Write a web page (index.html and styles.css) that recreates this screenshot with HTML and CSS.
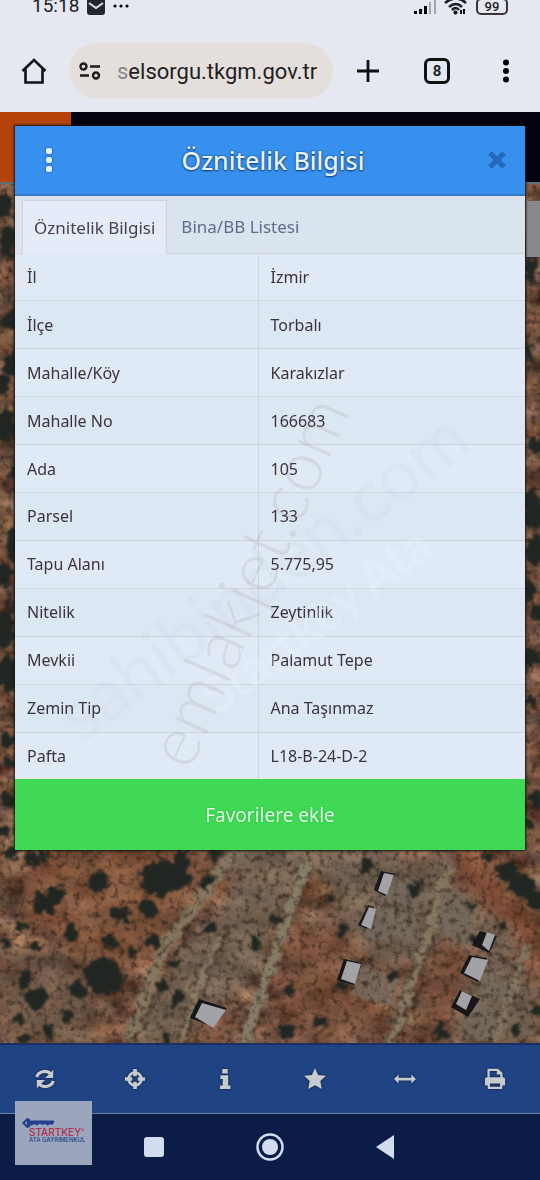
FILE: index.html
```
<!DOCTYPE html>
<html lang="tr">
<head>
  <meta charset="UTF-8" />
  <meta name="viewport" content="width=device-width, initial-scale=1.0"/>
  <title>Parsel Sorgu - Öznitelik Bilgisi</title>
  <link rel="stylesheet" href="styles.css">
</head>
<body>
  <!-- BROWSER -->
  <header class="browser">
    <div class="status">
      <span class="clock">15:18</span>
      <svg class="mail" viewBox="0 0 18 18"><rect width="18" height="18" rx="3" fill="#25262b"/><path d="M2 6l7 5 7-5" fill="none" stroke="#dfe2ea" stroke-width="2"/></svg>
      <svg class="more" viewBox="0 0 16 4"><circle cx="2" cy="2" r="1.6"/><circle cx="8" cy="2" r="1.6"/><circle cx="14" cy="2" r="1.6"/></svg>
      <svg class="signal" viewBox="0 0 22 16"><path d="M0 13h3v3H0zM5 11h3v5H5zM10 8h3v8h-3z"/><path d="M15 4h2v12h-2zM20 0h2v16h-2z" fill="#a3a5ab"/></svg>
      <svg class="wifi" viewBox="0 0 24 18"><g fill="none" stroke="#1d1e22" stroke-width="2.6"><path d="M1 6Q12-3 22 6M5 10q7-6 13 0M8 13q4-4 7 0"/></g><circle cx="11.500" cy="15.500" r="2"/><path d="M16 13h2v4h-2zM19 12h2v5h-2z"/></svg>
      <span class="battery">99</span>
    </div>
    <div class="address-bar">
      <button class="icon-btn" aria-label="Ana sayfa"><svg viewBox="0 0 26 26"><path d="M1.500 13L13 2l11.500 11M4.500 11v13.500h17V11" fill="none" stroke="#111" stroke-width="2.600"/></svg></button>
      <div class="address">
        <svg viewBox="0 0 22 18"><g fill="none" stroke="#1c1a1b" stroke-width="2.400"><circle cx="4.500" cy="4.500" r="3"/><path d="M11 4.500h10M1 13.500h9"/><circle cx="17" cy="13.500" r="3"/></g></svg>
        <span><span class="faded">s</span>elsorgu.tkgm.gov.tr</span>
      </div>
      <div class="actions">
        <button class="icon-btn" aria-label="Yeni sekme"><svg viewBox="0 0 26 26"><path d="M13 2v22M2 13h22" stroke="#111" stroke-width="2.800"/></svg></button>
        <button class="icon-btn tab-count" aria-label="Sekmeler">8</button>
        <button class="icon-btn" aria-label="Menü"><svg viewBox="0 0 26 26"><circle cx="13" cy="4.500" r="3"/><circle cx="13" cy="13" r="3"/><circle cx="13" cy="21.500" r="3"/></svg></button>
      </div>
    </div>
  </header>

  <!-- MAP + DIALOG -->
  <main class="stage">
    <svg class="map" viewBox="0 112 540 931" preserveAspectRatio="xMidYMax slice" aria-hidden="true">
      <defs>
        <filter id="soil" x="0" y="0" width="1" height="1" color-interpolation-filters="sRGB">
          <feTurbulence type="fractalNoise" baseFrequency="0.03 0.045" numOctaves="6" seed="8"/>
          <feColorMatrix values=".7 0 0 0 0.110  .55 .12 0 0 -0.010  .42 .12 .1 0 -0.070  0 0 0 0 1"/>
        </filter>
        <filter id="grain" x="0" y="0" width="1" height="1" color-interpolation-filters="sRGB">
          <feTurbulence type="fractalNoise" baseFrequency="0.160" numOctaves="4" seed="3"/>
          <feColorMatrix values="0 0 0 0 .13  0 0 0 0 .09  0 0 0 0 .06  2.200 0 0 0 -1.050"/>
          <feGaussianBlur stdDeviation="0.500"/>
        </filter>
        <filter id="rough" x="-5%" y="-5%" width="110%" height="110%">
          <feTurbulence type="fractalNoise" baseFrequency="0.120" numOctaves="3" seed="5"/>
          <feDisplacementMap in="SourceGraphic" scale="14" xChannelSelector="R" yChannelSelector="G"/>
          <feGaussianBlur stdDeviation="0.800"/>
        </filter>
        <filter id="soft"><feGaussianBlur stdDeviation="7"/></filter>
        <circle id="t" r="10"/>
      </defs>
      <rect y="112" width="540" height="931" fill="#7b5742"/>
      <rect y="112" width="540" height="931" filter="url(#soil)"/>
      <g filter="url(#soft)" opacity=".6">
        <path d="M205 840h180l35 30 80 70 40 60v43H420l30-120-60-55-50 20-40-20-50 115-80 60h-45l60-100 50-60z" fill="#777061"/>
        <path d="M340 860h120l60 80-20 103h-50l-10-110-50 40-60-30z" fill="#777061"/>
        <path d="M0 945l60 10 30 40 10 48H0z" fill="#6f5e50"/>
        <path d="M465 840l75 90v60l-30-60-60-55z" fill="#87492f"/>
        <path d="M285 930l50-10 50 50-5 73h-90z" fill="#80523c"/>
        <path d="M440 940l40 10-30 93h-35z" fill="#80523c"/>
        <path d="M30 850h150l30 20-70 100-60-20-60-30z" fill="#8c5a3d"/>
      </g>
      <g fill="none" filter="url(#rough)">
        <path d="M235 850l-35 50-35 45-38 98" stroke="#84765f" stroke-width="12"/>
        <path d="M213 905l-35 45-45 93" stroke="#453b30" stroke-width="2"/>
        <path d="M222 930l-20 45-22 68" stroke="#8c7d66" stroke-width="4"/>
        <path d="M226 932l-19 45-22 66" stroke="#3d332b" stroke-width="2"/>
        <path d="M307 860l-24 70-38 113" stroke="#877b66" stroke-width="11"/>
        <path d="M300 860l-24 70-38 113M312 864l-24 70-38 109" stroke="#514638" stroke-width="1"/>
        <path d="M450 865l-25 75-36 103" stroke="#867861" stroke-width="10"/>
        <path d="M434 895l-15 50-33 98M450 900l-20 50-34 93" stroke="#51453a" stroke-width="2"/>
        <path d="M528 945l-18 50-18 48" stroke="#857762" stroke-width="7"/>
        <path d="M392 872l40 16M380 902l48 15M358 960l47 18M494 950l28 22M486 993l24 11M228 1003l22 8" stroke="#42372d" stroke-width="2"/>
      </g>
      <g fill="#746b5e" opacity=".8" filter="url(#rough)">
        <path d="M392 878l36 14-12 22-38-15zM382 906l37 12-12 24-42-6zM358 964l42 16-8 28-40-15zM442 890l34 18-8 35-34-10zM486 971l26 16-8 18-22-10zM476 1005l24 5-8 30-30-4z"/>
      </g>
      <rect y="184" width="540" height="859" filter="url(#grain)" opacity=".7"/>
      <g fill="#242824" filter="url(#rough)">
        <use href="#t" transform="translate(160 878) scale(2 1.800)"/>
        <use href="#t" transform="translate(181 876) scale(1 1.200)"/>
        <use href="#t" transform="translate(44 903) scale(1.100 1.100)"/>
        <use href="#t" transform="translate(56 895) scale(.9)"/>
        <use href="#t" transform="translate(97 882) scale(1 .9)"/>
        <use href="#t" transform="translate(120 914) scale(1 .9)"/>
        <use href="#t" transform="translate(147 909) scale(1 .9)"/>
        <use href="#t" transform="translate(72 932) scale(.8)"/>
        <use href="#t" transform="translate(110 941) scale(.7)"/>
        <use href="#t" transform="translate(154 942) scale(.7)"/>
        <use href="#t" transform="translate(132 953) scale(.5)"/>
        <use href="#t" transform="translate(104 976) scale(2 1.800)"/>
        <use href="#t" transform="translate(36 999) scale(1.100 1.200)"/>
        <use href="#t" transform="translate(24 978) scale(.7 1)"/>
        <use href="#t" transform="translate(78 990) scale(.8)"/>
        <use href="#t" transform="translate(67 1017) scale(.7 .6)"/>
        <use href="#t" transform="translate(48 1032) scale(.7)"/>
        <use href="#t" transform="translate(24 1038) scale(.5)"/>
        <use href="#t" transform="translate(18 1018) scale(.5)"/>
        <use href="#t" transform="translate(5 943) scale(.6)"/>
        <use href="#t" transform="translate(36 947) scale(.5)"/>
        <use href="#t" transform="translate(22 925) scale(.5)"/>
        <use href="#t" transform="translate(12 853) scale(.7)"/>
        <use href="#t" transform="translate(31 859) scale(.7)"/>
        <use href="#t" transform="translate(44 855) scale(.6)"/>
        <use href="#t" transform="translate(180 858) scale(.8)"/>
        <use href="#t" transform="translate(206 881) scale(.6)"/>
        <use href="#t" transform="translate(213 854) scale(.6)"/>
        <use href="#t" transform="translate(212 929) scale(.7 .5)"/>
        <use href="#t" transform="translate(174 964) scale(.6 .4)"/>
        <use href="#t" transform="translate(163 985) scale(.6)"/>
        <use href="#t" transform="translate(177 1000) scale(.8)"/>
        <use href="#t" transform="translate(166 1038) scale(.6)"/>
        <use href="#t" transform="translate(257 944) scale(.4 .7)"/>
        <use href="#t" transform="translate(366 865) scale(.8)"/>
        <use href="#t" transform="translate(415 889) scale(.7)"/>
        <use href="#t" transform="translate(330 898) scale(.5)"/>
        <use href="#t" transform="translate(342 929) scale(.6)"/>
        <use href="#t" transform="translate(275 920) scale(.4)"/>
        <use href="#t" transform="translate(340 985) scale(.6)"/>
        <use href="#t" transform="translate(393 975) scale(.4)"/>
        <use href="#t" transform="translate(290 989) scale(.6)"/>
        <use href="#t" transform="translate(319 1023) scale(.7)"/>
        <use href="#t" transform="translate(286 1032) scale(.8)"/>
        <use href="#t" transform="translate(441 1031) scale(.8)"/>
        <use href="#t" transform="translate(515 1029) scale(.7)"/>
        <use href="#t" transform="translate(488 857) scale(.6)"/>
        <use href="#t" transform="translate(472 905) scale(.4)"/>
        <use href="#t" transform="translate(475 940) scale(.5)"/>
        <use href="#t" transform="translate(507 872) scale(1)"/>
        <use href="#t" transform="translate(522 884) scale(1.300 1.100)"/>
        <use href="#t" transform="translate(537 900) scale(1.100)"/>
        <use href="#t" transform="translate(502 925) scale(.4)"/>
        <use href="#t" transform="translate(538 1010) scale(.5)"/>
        <!-- left strip -->
        <use href="#t" transform="translate(4 205) scale(.9 1.200)"/>
        <use href="#t" transform="translate(8 242) scale(.8 1.500)"/>
        <use href="#t" transform="translate(10 322) scale(.7 1)"/>
        <use href="#t" transform="translate(10 365) scale(.8 1.200)"/>
        <use href="#t" transform="translate(2 385) scale(.7 1)"/>
        <use href="#t" transform="translate(5 425) scale(1 1.700)"/>
        <use href="#t" transform="translate(13 472) scale(.5 .8)"/>
        <use href="#t" transform="translate(12 543) scale(.6 1.800)"/>
        <use href="#t" transform="translate(4 574) scale(.9 1.200)"/>
        <use href="#t" transform="translate(5 628) scale(1 1.800)"/>
        <use href="#t" transform="translate(8 674) scale(1.100 2)"/>
        <use href="#t" transform="translate(7 740) scale(.6 .8)"/>
        <use href="#t" transform="translate(10 762) scale(.5)"/>
        <use href="#t" transform="translate(9 800) scale(.7)"/>
        <use href="#t" transform="translate(3 832) scale(.7)"/>
        <!-- right strip -->
        <use href="#t" transform="translate(530 270) scale(.6 1.500)"/>
        <use href="#t" transform="translate(529 352) scale(.4 1)"/>
        <use href="#t" transform="translate(536 445) scale(.9 .7)"/>
        <use href="#t" transform="translate(534 510) scale(1 2)"/>
        <use href="#t" transform="translate(536 550) scale(1 1.500)"/>
        <use href="#t" transform="translate(530 592) scale(.5 1)"/>
        <use href="#t" transform="translate(538 612) scale(.7 1)"/>
        <use href="#t" transform="translate(531 658) scale(.8 .9)"/>
        <use href="#t" transform="translate(530 700) scale(.5 .6)"/>
        <use href="#t" transform="translate(536 800) scale(.7 .9)"/>
        <use href="#t" transform="translate(530 825) scale(.5)"/>
      </g>
      <!-- buildings -->
      <g fill="#17171a">
        <path d="M374 890l7-19 14 3-10 22zM358 925l10-20 6 2-7 22zM337 980l7-21 18 4-8 22zM460 973l9-18 18 3-9 24zM451 1007l9-17 20 9-12 18zM472 945l8-14 17 5-8 17zM190 1018l9-19 28 9-14 19z"/>
      </g>
      <g fill="#a3a2a7">
        <path d="M378 891l6-18 10 2-7 20zM361 925l8-18 7 2-5 20zM341 979l6-18 14 3-6 20zM464 973l8-16 16 3-8 21zM456 1004l6-13 10 5-6 14zM482 945l5-13 8 3-6 16zM195 1017l7-14 24 7-13 18z"/>
      </g>
      <!-- site header behind the dialog -->
      <path d="M0 112h540v70H0z" fill="#03040f"/>
      <path d="M0 112h71v71H0z" fill="#b64308"/>
      <path d="M0 183h540" stroke="#5f6f74" stroke-width="2"/>
      <path d="M526 201h14v56h-14z" fill="#8a888c"/>
    </svg>

    <section class="dialog">
      <div class="dialog-header">
        <button class="dialog-btn" aria-label="Seçenekler"><svg viewBox="0 0 26 26"><g fill="#e4f3ff"><rect x="10" y="1" width="6" height="6" rx="2"/><rect x="10" y="10" width="6" height="6" rx="2"/><rect x="10" y="19" width="6" height="6" rx="2"/></g></svg></button>
        <h1>Öznitelik Bilgisi</h1>
        <button class="dialog-btn close" aria-label="Kapat"><svg viewBox="0 0 26 26"><path d="M6 6l14 14M20 6L6 20" stroke="#2567b8" stroke-width="5"/></svg></button>
      </div>
      <div class="tabs">
        <button class="tab active">Öznitelik Bilgisi</button>
        <button class="tab">Bina/BB Listesi</button>
      </div>
      <table class="info">
        <tr><th scope="row">İl</th><td>İzmir</td></tr>
        <tr><th scope="row">İlçe</th><td>Torbalı</td></tr>
        <tr><th scope="row">Mahalle/Köy</th><td>Karakızlar</td></tr>
        <tr><th scope="row">Mahalle No</th><td>166683</td></tr>
        <tr><th scope="row">Ada</th><td>105</td></tr>
        <tr><th scope="row">Parsel</th><td>133</td></tr>
        <tr><th scope="row">Tapu Alanı</th><td>5.775,95</td></tr>
        <tr><th scope="row">Nitelik</th><td>Zeytinlik</td></tr>
        <tr><th scope="row">Mevkii</th><td>Palamut Tepe</td></tr>
        <tr><th scope="row">Zemin Tip</th><td>Ana Taşınmaz</td></tr>
        <tr><th scope="row">Pafta</th><td>L18-B-24-D-2</td></tr>
      </table>
      <button class="favorite">Favorilere ekle</button>
    </section>

    <svg class="watermark" viewBox="0 112 540 931" preserveAspectRatio="xMidYMin meet">
      <text class="wm-white" x="218" y="716" transform="rotate(-37 218 716)">Startkey Ata</text>
      <text class="wm-faint" x="82" y="744" transform="rotate(-37 82 744)">sahibinden.com</text>
      <text class="wm-grey" x="190" y="772" transform="rotate(-66 190 772)">emlakjet.com</text>
    </svg>
  </main>

  <!-- MAP TOOLS -->
  <nav class="toolbar">
    <button aria-label="Yenile"><svg viewBox="0 0 24 24"><path d="M3 10a9 8 0 0 1 15-4M21 14a9 8 0 0 1-15 4" fill="none" stroke="#c6cbd0" stroke-width="3.500"/><path d="M21 2v9h-9zM3 22v-9h9z"/></svg></button>
    <button aria-label="Konum"><svg viewBox="0 0 24 24"><circle cx="12" cy="12" r="7" fill="none" stroke="#c6cbd0" stroke-width="3"/><path d="M10 1h4v8h-4zM10 15h4v8h-4zM1 10h8v4H1zM15 10h8v4h-8z"/></svg></button>
    <button aria-label="Bilgi"><svg viewBox="0 0 24 24"><path d="M9 1h6v5H9zM7 8h8.500v11H18v4H6.500v-4h3v-7H7z"/></svg></button>
    <button aria-label="Favoriler"><svg viewBox="0 0 24 24"><path d="M12 0l3.400 7.500 8.600 1-6.200 5.800L19.500 23 12 18.800 4.500 23l1.700-8.700L0 8.500l8.600-1z"/></svg></button>
    <button aria-label="Ölç"><svg viewBox="0 0 24 24"><path d="M0 12l5-5v3.500h14V7l5 5-5 5v-3.500H5V17z"/></svg></button>
    <button aria-label="Yazdır"><svg viewBox="0 0 24 24"><path d="M5 11V2h10l4 4v5" fill="none" stroke="#c6cbd0" stroke-width="2.500"/><path d="M14 2v5h5z"/><path d="M1 12q0-2 2-2h18q2 0 2 2v7h-3v4H4v-4H1zM6.500 17v3.500h11V17z" fill-rule="evenodd"/></svg></button>
  </nav>

  <!-- SYSTEM NAVIGATION -->
  <footer class="system">
    <button aria-label="Son uygulamalar"><svg viewBox="0 0 28 28"><rect x="4" y="4" width="20" height="20" rx="3"/></svg></button>
    <button aria-label="Ana ekran"><svg viewBox="0 0 28 28"><circle cx="14" cy="14" r="12.500" fill="none" stroke="#d3dcf0" stroke-width="2.500"/><circle cx="14" cy="14" r="8"/></svg></button>
    <button aria-label="Geri"><svg viewBox="0 0 28 28"><path d="M4 14L22 2v24z"/></svg></button>
    <div class="brand">
      <svg viewBox="0 0 34 10"><path d="M0 5l5-5 3 1v1.500h24V5l-2 2-2-1-2 1.500L23 6l-3 1-2-1.500-3 2L12 6l-2 1.500H8V9L5 10z" fill="#23408c"/><path d="M3 5l2-2v4z" fill="#9aa3b9"/></svg>
      <strong>STARTKEY<sup>®</sup></strong>
      <span>ATA GAYRİMENKUL</span>
    </div>
  </footer>
</body>
</html>
```
FILE: styles.css
```
:root {
  --ink: #3c3338;
  --blue: #3890ee;
  --panel: #dfeaf6;
  --line: #d0d4dc;
  --green: #40d955;
  --toolbar: #204383;
  --system: #0b1d46;
}

* {
  box-sizing: border-box;
}

body {
  margin: 0;
  min-height: 100vh;
  display: flex;
  flex-direction: column;
  font-family: 'Noto Sans', sans-serif;
  color: var(--ink);
  background: var(--system);
  overflow-x: hidden;
}

button {
  border: none;
  background: none;
  padding: 0;
  color: inherit;
  font: inherit;
  cursor: pointer;
}

svg {
  display: block;
}

/* browser */
.browser {
  background: #e5e8f0;
  padding-bottom: 13px;
  font-family: Roboto, sans-serif;
  color: #1d1e22;
}

.status {
  display: flex;
  align-items: center;
  gap: 8px;
  height: 12px;
  margin-bottom: 31px;
  padding: 0 32px;
}

.clock {
  font-size: 19px;
  line-height: 20px;
}

.mail {
  width: 18px;
  height: 18px;
}

.more {
  width: 16px;
  height: 4px;
}

.signal {
  width: 22px;
  height: 16px;
  margin-left: auto;
}

.wifi {
  width: 24px;
  height: 18px;
}

.battery {
  border: 2px solid #3c3338;
  border-radius: 5px;
  width: 32px;
  font-size: 13px;
  font-weight: 500;
  line-height: 13px;
  text-align: center;
}

.address-bar {
  display: flex;
  align-items: center;
  gap: 22px;
  padding: 0 21px;
}

.icon-btn {
  width: 26px;
  height: 26px;
  flex: none;
}

.icon-btn svg {
  width: 26px;
  height: 26px;
}

.address {
  flex: 1;
  display: flex;
  align-items: center;
  gap: 16px;
  height: 56px;
  padding: 0 10px;
  border-radius: 28px;
  background: #e5dfdc;
  font-size: 22px;
  white-space: nowrap;
}

.address svg {
  width: 22px;
  height: 18px;
  flex: none;
}

.faded {
  color: #8d8886;
}

.actions {
  display: flex;
  gap: 43px;
}

.tab-count {
  border: 3px solid #111;
  border-radius: 6px;
  font-size: 15px;
  font-weight: 700;
  line-height: 18px;
}

/* map area */
.stage {
  flex: 1;
  position: relative;
  padding: 14px 15px 193px;
  overflow: hidden;
}

.map,
.watermark {
  position: absolute;
  top: 0;
  left: 0;
  width: 100%;
  height: 100%;
}

.watermark {
  pointer-events: none;
  font-family: Lato, sans-serif;
}

.wm-grey {
  font-size: 70px;
  font-weight: 300;
  fill: rgba(140, 110, 115, 0.14);
}

.wm-faint {
  font-size: 72px;
  fill: rgba(150, 160, 185, 0.06);
}

.wm-white {
  font-size: 50px;
  font-weight: 700;
  fill: rgba(240, 244, 255, 0.3);
}

/* dialog */
.dialog {
  position: relative;
  background: var(--panel);
  box-shadow: 0 0 2px 1px #14130f;
}

.dialog-header {
  display: flex;
  align-items: center;
  justify-content: space-between;
  height: 70px;
  padding: 0 15px 0 21px;
  background: var(--blue);
  border-bottom: 2px solid #3779c4;
}

.dialog-header h1 {
  margin: 0;
  font-size: 25px;
  font-weight: 500;
  color: #e4f3ff;
  text-shadow: 0 0 2px #123c70, 0 1px 2px #123c70;
}

.dialog-btn,
.dialog-btn svg {
  width: 26px;
  height: 26px;
}

.dialog-btn svg {
  filter: drop-shadow(0 0 1px #123c70);
}

.dialog-btn.close svg {
  filter: none;
}

.tabs {
  display: flex;
  height: 58px;
  padding: 4px 7px 0;
  background: #d9e4ef;
  border-bottom: 1px solid var(--line);
}

.tab {
  padding: 0 14px;
  font-size: 17px;
  color: #5f6c8d;
}

.tab.active {
  margin-bottom: -1px;
  padding: 0 11px;
  background: #e3ecf8;
  border: 1px solid var(--line);
  border-bottom: none;
  color: #4a4248;
}

.info {
  width: 100%;
  height: 525px;
  border-collapse: collapse;
  font-size: 16px;
}

.info tr:nth-child(even) {
  background: #dce7f4;
}

.info th,
.info td {
  padding: 0 12px;
  font-weight: 400;
  text-align: left;
  border-bottom: 1px solid var(--line);
}

.info th {
  width: 243px;
  border-right: 1px solid var(--line);
}

.info tr:last-child > * {
  border-bottom: none;
}

.favorite {
  display: block;
  width: 100%;
  height: 71px;
  background: var(--green);
  color: #e2ffe5;
  font-size: 19px;
  text-shadow: 0 0 2px #23a53a;
}

/* bottom bars */
.toolbar {
  display: flex;
  height: 70px;
  background: var(--toolbar);
  border-top: 2px solid #1b2f63;
}

.toolbar button {
  flex: 1;
  display: grid;
  place-items: center;
}

.toolbar svg {
  width: 22px;
  height: 22px;
  fill: #c6cbd0;
  filter: drop-shadow(0 0 1px #081531);
}

.system {
  position: relative;
  display: flex;
  align-items: center;
  justify-content: center;
  gap: 88px;
  height: 67px;
  background: var(--system);
  border-top: 1px solid #6c7fa9;
}

.system button svg {
  width: 28px;
  height: 28px;
  fill: #d3dcf0;
}

.brand {
  position: absolute;
  left: 15px;
  bottom: 15px;
  width: 77px;
  height: 64px;
  padding: 17px 7px 0;
  background: #9ba5bb;
  color: #23408c;
  font-family: Inter, sans-serif;
  font-size: 6px;
  font-weight: 500;
  line-height: 6px;
  white-space: nowrap;
}

.brand svg {
  width: 34px;
  height: 10px;
}

.brand strong,
.brand span {
  display: block;
  margin-left: 7px;
}

.brand strong {
  color: #b0304f;
  font-size: 10px;
  font-weight: 500;
  line-height: 9px;
}

.brand sup {
  font-size: 5px;
  line-height: 0;
}
```
